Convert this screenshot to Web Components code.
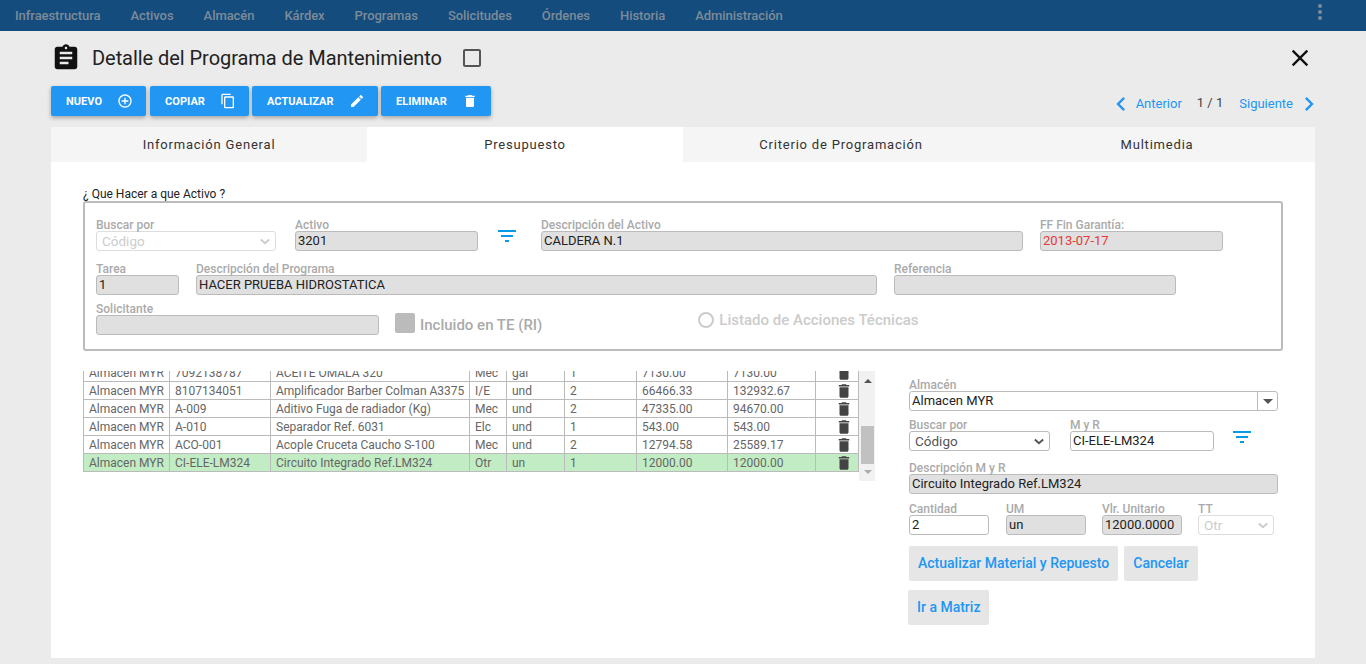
<!DOCTYPE html>
<html lang="es"><head><meta charset="utf-8"><title>Detalle del Programa de Mantenimiento</title>
<style>
html,body{margin:0;padding:0;height:664px;overflow:hidden;background:#ebebeb;font-family:Roboto,"Liberation Sans",sans-serif}
</style></head><body>
<app-page></app-page>
<script>
const P={
assignment:"M19 3h-4.18C14.4 1.84 13.3 1 12 1c-1.3 0-2.4.84-2.82 2H5c-1.1 0-2 .9-2 2v14c0 1.1.9 2 2 2h14c1.1 0 2-.9 2-2V5c0-1.1-.9-2-2-2zm-7 0c.55 0 1 .45 1 1s-.45 1-1 1-1-.45-1-1 .45-1 1-1zm2 14H7v-2h7v2zm3-4H7v-2h10v2zm0-4H7V7h10v2z",
add:"M13 7h-2v4H7v2h4v4h2v-4h4v-2h-4V7zm-1-5C6.49 2 2 6.49 2 12s4.49 10 10 10 10-4.49 10-10S17.51 2 12 2zm0 18c-4.41 0-8-3.59-8-8s3.59-8 8-8 8 3.59 8 8-3.59 8-8 8z",
copy:"M16 1H4c-1.1 0-2 .9-2 2v14h2V3h12V1zm3 4H8c-1.1 0-2 .9-2 2v14c0 1.1.9 2 2 2h11c1.1 0 2-.9 2-2V7c0-1.1-.9-2-2-2zm0 16H8V7h11v14z",
edit:"M3 17.25V21h3.75L17.81 9.94l-3.75-3.75L3 17.25zM20.71 7.04c.39-.39.39-1.02 0-1.41l-2.34-2.34c-.39-.39-1.02-.39-1.41 0l-1.83 1.83 3.75 3.75 1.83-1.83z",
del:"M6 19c0 1.1.9 2 2 2h8c1.1 0 2-.9 2-2V7H6v12zM19 4h-3.5l-1-1h-5l-1 1H5v2h14V4z",
filter:"M10 18h4v-2h-4v2zM3 6v2h18V6H3zm3 7h12v-2H6v2z",
close:"M19 6.41L17.59 5 12 10.59 6.41 5 5 6.41 10.59 12 5 17.59 6.41 19 12 13.41 17.59 19 19 17.59 13.41 12z",
more:"M12 8c1.1 0 2-.9 2-2s-.9-2-2-2-2 .9-2 2 .9 2 2 2zm0 2c-1.1 0-2 .9-2 2s.9 2 2 2 2-.9 2-2-.9-2-2-2zm0 6c-1.1 0-2 .9-2 2s.9 2 2 2 2-.9 2-2-.9-2-2-2z",
prev:"M15.41 7.41L14 6l-6 6 6 6 1.41-1.41L10.83 12z",
next:"M10 6L8.59 7.41 13.17 12l-4.58 4.58L10 18l6-6z",
box:"M19 5v14H5V5h14m0-2H5c-1.1 0-2 .9-2 2v14c0 1.1.9 2 2 2h14c1.1 0 2-.9 2-2V5c0-1.1-.9-2-2-2z"
};
class XIcon extends HTMLElement{connectedCallback(){
 const s=this.getAttribute('size')||24,c=this.getAttribute('color')||'currentColor';
 this.attachShadow({mode:'open'}).innerHTML=`<style>:host{display:inline-flex;flex:none}svg{display:block}</style><svg width="${s}" height="${s}" viewBox="0 0 24 24" fill="${c}"><path d="${P[this.getAttribute('name')]}"/></svg>`;
}}
customElements.define('x-icon',XIcon);

class XNav extends HTMLElement{connectedCallback(){
 const items=['Infraestructura','Activos','Almacén','Kárdex','Programas','Solicitudes','Órdenes','Historia','Administración'];
 this.attachShadow({mode:'open'}).innerHTML=`<style>
 :host{display:flex;height:31px;background:#134c7d;align-items:center;padding-left:15px;padding-right:34px;box-sizing:border-box;position:relative}
 nav{display:flex;flex:1;gap:30px}
 span{font:500 13px/31px Roboto,sans-serif;letter-spacing:-.06px;color:#7d8b98;white-space:nowrap}
 .dots{margin-top:-7px}
 </style><nav>${items.map(i=>`<span>${i}</span>`).join('')}</nav><x-icon class="dots" name="more" size="24" color="#7d8b98"></x-icon>`;
}}
customElements.define('x-nav',XNav);

class XBtn extends HTMLElement{connectedCallback(){
 const w=this.getAttribute('w');
 this.attachShadow({mode:'open'}).innerHTML=`<style>
 :host{display:inline-flex;width:${w}px;height:30px;box-sizing:border-box;background:#2196f3;border-radius:2px;color:#fff;align-items:center;justify-content:space-between;padding:0 13px 0 15px;box-shadow:0 2px 4px rgba(0,0,0,.3);font:700 11px/30px Roboto,sans-serif}
 span{padding-top:2px;letter-spacing:.05px}
 </style><span><slot></slot></span><x-icon name="${this.getAttribute('icon')}" size="16" color="#fff"></x-icon>`;
}}
customElements.define('x-btn',XBtn);

class XTabs extends HTMLElement{connectedCallback(){
 const t=['Información General','Presupuesto','Criterio de Programación','Multimedia'];
 this.attachShadow({mode:'open'}).innerHTML=`<style>
 :host{display:grid;grid-template-columns:316px 316px 316px 316px;height:35px;background:#f5f5f5}
 div{font:400 13px/35px Roboto,sans-serif;letter-spacing:.8px;color:#333;text-align:center}
 .on{background:#fff}
 </style>${t.map((x,i)=>`<div class="${i==1?'on':''}">${x}</div>`).join('')}`;
}}
customElements.define('x-tabs',XTabs);

class XField extends HTMLElement{connectedCallback(){
 const a=n=>this.getAttribute(n);
 const kind=a('kind')||'ro', w=a('w'), color=a('color')||'#222';
 const chev=c=>`<svg class="chev" width="10" height="7" viewBox="0 0 12 8" fill="none" stroke="${c}" stroke-width="2.4"><path d="M1 1.5l5 4.5 5-4.5"/></svg>`;
 let right='';
 if(kind=='sel')right=chev('#555');
 if(kind=='seld')right=chev('#ccc');
 if(kind=='combo')right=`<i class="drop"><svg width="10" height="5" viewBox="0 0 10 5"><path d="M0 0h10L5 5z" fill="#555"/></svg></i>`;
 this.attachShadow({mode:'open'}).innerHTML=`<style>
 :host{display:block;width:${w}px;flex:none}
 label{display:block;height:12px;font:500 12px/12px Roboto,sans-serif;color:#aaa;white-space:nowrap}
 .in{box-sizing:border-box;height:20px;border:1px solid #bbb;border-radius:3px;display:flex;align-items:center;justify-content:space-between;padding:0 2px;font:400 13px/18px Roboto,sans-serif;color:${color};background:#fff;white-space:nowrap;overflow:hidden}
 .ro{background:#e0e0e0}
 .sel,.seld{padding:0 5px;font-size:13.5px}
 .sel span{color:#555}
 .seld{border-color:#ddd}.seld span{color:#ccc}
 .combo{padding:0 0 0 2px;color:#222}
 .drop{display:flex;align-items:center;justify-content:center;width:19px;height:18px;border-left:1px solid #bbb}
 </style><label>${a('label')}</label><div class="in ${kind}"><span>${a('value')||''}</span>${right}</div>`;
}}
customElements.define('x-field',XField);

class XTable extends HTMLElement{connectedCallback(){
 const rows=[
 ['Almacen MYR','7092138787','ACEITE OMALA 320','Mec','gal','1','7130.00','7130.00'],
 ['Almacen MYR','8107134051','Amplificador Barber Colman A3375','I/E','und','2','66466.33','132932.67'],
 ['Almacen MYR','A-009','Aditivo Fuga de radiador (Kg)','Mec','und','2','47335.00','94670.00'],
 ['Almacen MYR','A-010','Separador Ref. 6031','Elc','und','1','543.00','543.00'],
 ['Almacen MYR','ACO-001','Acople Cruceta Caucho S-100','Mec','und','2','12794.58','25589.17'],
 ['Almacen MYR','CI-ELE-LM324','Circuito Integrado Ref.LM324','Otr','un','1','12000.00','12000.00']];
 const cols=[86,101,199,37,58,72,91,88,43];
 this.attachShadow({mode:'open'}).innerHTML=`<style>
 :host{display:flex;width:792px;height:111px;align-items:flex-start;flex:none}
 .wrap{width:776px;height:102px;overflow:hidden}
 table{border-collapse:collapse;table-layout:fixed;width:776px;margin-top:-8px}
 td{height:18px;box-sizing:border-box;padding:0 0 0 5px;border:1px solid #bbb;font:400 12px/16px Roboto,sans-serif;color:#666;white-space:nowrap;overflow:hidden}
 tr.sel td{background:#c2ecc4}
 td.t{padding:0 0 0 14px}
 td.t x-icon{display:flex;height:16px;justify-content:center;align-items:center}
 .bar{width:16px;height:110px;background:#f1f1f1;display:flex;flex-direction:column;align-items:center;justify-content:space-between;position:relative;padding:8px 0 7px 1px;box-sizing:border-box}
 .thumb{position:absolute;left:2px;top:55px;width:13px;height:38px;background:#c1c1c1}
 </style><div class="wrap"><table><colgroup>${cols.map(c=>`<col style="width:${c}px">`).join('')}</colgroup>
 ${rows.map((r,i)=>`<tr class="${i==5?'sel':''}">${r.map(c=>`<td>${c}</td>`).join('')}<td class="t"><x-icon name="del" size="18" color="#444"></x-icon></td></tr>`).join('')}
 </table></div><div class="bar"><svg width="8" height="4" viewBox="0 0 8 4"><path d="M4 0l4 4H0z" fill="#555"/></svg><div class="thumb"></div><svg width="8" height="4" viewBox="0 0 8 4"><path d="M0 0h8L4 4z" fill="#aaa"/></svg></div>`;
}}
customElements.define('x-table',XTable);

class XGray extends HTMLElement{connectedCallback(){
 this.attachShadow({mode:'open'}).innerHTML=`<style>
 :host{display:inline-block;height:35px;padding:0 9px;background:#e6e6e6;border-radius:2px;color:#2196f3;font:500 14px/35px Roboto,sans-serif;white-space:nowrap}
 </style><slot></slot>`;
}}
customElements.define('x-gray',XGray);

class AppPage extends HTMLElement{connectedCallback(){
 this.attachShadow({mode:'open'}).innerHTML=`<style>
 :host{display:flex;flex-direction:column;height:664px;font-family:Roboto,sans-serif}
 main{flex:1;display:flex;flex-direction:column;padding:0 51px 6px;min-height:0}
 .head{display:flex;align-items:center;height:54px}
 .head h1{font:400 20px/28px Roboto,sans-serif;color:#222;margin:0 0 0 11px;letter-spacing:-.05px}
 .head .cb{margin-left:18px}
 .head .x{margin-left:auto;margin-right:1px}
 .acts{display:flex;align-items:center;height:31px;gap:4px}
 .pager{margin-left:auto;display:flex;align-items:center;font:400 13px/20px Roboto,sans-serif;color:#2196f3;margin-top:7px;margin-right:-8px}
 .pager b{font-weight:400;color:#444;margin:-3px 16px 0 15px}
 .card{margin-top:11px;flex:1;background:#fff;display:flex;flex-direction:column}
 .body{padding:26px 32px 0;flex:1}
 .legend{font:400 12px/12px Roboto,sans-serif;color:#222;height:12px}
 .box{box-sizing:border-box;height:150px;border:2px solid #bbb;border-radius:3px;padding:16px 11px 0;display:flex;flex-direction:column;margin-top:1px}
 .r{display:flex;align-items:flex-end}
 .r1{margin-bottom:12px}.r2{margin-bottom:8px}
 .fi{display:block;margin:0 0 3px}
 .chk{width:20px;height:20px;background:#bbb;border-radius:2px;flex:none;margin:0 5px 2px 16px}
 .cl{font:500 15px/20px Roboto,sans-serif;color:#aaa;white-space:nowrap}
 .rad{width:16px;height:16px;box-sizing:border-box;border:2px solid #ccc;border-radius:50%;flex:none;margin:0 5px 7px 156px}
 .rl{font:500 15px/20px Roboto,sans-serif;color:#ccc;white-space:nowrap;margin-bottom:5px}
 .bot{display:flex;margin-top:20px}
 .side{margin-left:34px;margin-top:8px;width:369px}
 .side .r{margin-bottom:8px}
 .side .r.b{margin-bottom:9px}
 </style>
 <x-nav></x-nav>
 <main>
  <div class="head"><x-icon name="assignment" size="30" color="#111" style="margin-top:-1px"></x-icon>
   <h1>Detalle del Programa de Mantenimiento</h1>
   <x-icon class="cb" name="box" size="24" color="#555"></x-icon>
   <x-icon class="x" name="close" size="28" color="#111"></x-icon></div>
  <div class="acts">
   <x-btn w="95" icon="add">NUEVO</x-btn><x-btn w="99" icon="copy" style="margin-right:-1px">COPIAR</x-btn><x-btn w="126" icon="edit" style="margin-right:-1px">ACTUALIZAR</x-btn><x-btn w="110" icon="del">ELIMINAR</x-btn>
   <div class="pager"><x-icon name="prev" size="28" color="#2196f3"></x-icon><span style="margin-left:1px">Anterior</span><b>1 / 1</b><span>Siguiente</span><x-icon name="next" size="28" color="#2196f3" style="margin-left:2px"></x-icon></div>
  </div>
  <div class="card">
   <x-tabs></x-tabs>
   <div class="body">
    <div class="legend">¿ Que Hacer a que Activo ?</div>
    <div class="box">
     <div class="r r1">
      <x-field label="Buscar por" value="Código" w="180" kind="seld"></x-field>
      <x-field label="Activo" value="3201" w="183" style="margin-left:19px"></x-field>
      <x-icon class="fi" name="filter" size="24" color="#039be5" style="margin-left:17px"></x-icon>
      <x-field label="Descripción del Activo" value="CALDERA N.1" w="482" style="margin-left:22px"></x-field>
      <x-field label="FF Fin Garantía:" value="2013-07-17" color="#e53935" w="183" style="margin-left:17px"></x-field>
     </div>
     <div class="r r2">
      <x-field label="Tarea" value="1" w="83"></x-field>
      <x-field label="Descripción del Programa" value="HACER PRUEBA HIDROSTATICA" w="681" style="margin-left:17px"></x-field>
      <x-field label="Referencia" w="282" style="margin-left:17px"></x-field>
     </div>
     <div class="r">
      <x-field label="Solicitante" w="283"></x-field>
      <div class="chk"></div><div class="cl">Incluido en TE (RI)</div>
      <div class="rad"></div><div class="rl">Listado de Acciones Técnicas</div>
     </div>
    </div>
    <div class="bot">
     <x-table></x-table>
     <div class="side">
      <div class="r"><x-field label="Almacén" value="Almacen MYR" w="369" kind="combo"></x-field></div>
      <div class="r" style="margin-bottom:11px"><x-field label="Buscar por" value="Código" w="141" kind="sel"></x-field>
       <x-field label="M y R" value="CI-ELE-LM324" w="144" kind="plain" style="margin-left:20px"></x-field>
       <x-icon class="fi" name="filter" size="24" color="#039be5" style="margin-left:16px;margin-bottom:2px"></x-icon></div>
      <div class="r" style="margin-bottom:9px"><x-field label="Descripción M y R" value="Circuito Integrado Ref.LM324" w="369"></x-field></div>
      <div class="r" style="margin-bottom:11px"><x-field label="Cantidad" value="2" w="80" kind="plain"></x-field>
       <x-field label="UM" value="un" w="80" style="margin-left:17px"></x-field>
       <x-field label="Vlr. Unitario" value="12000.0000" w="80" style="margin-left:16px"></x-field>
       <x-field label="TT" value="Otr" w="76" kind="seld" style="margin-left:16px"></x-field></div>
      <div class="r b"><x-gray>Actualizar Material y Repuesto</x-gray><x-gray style="margin-left:6px">Cancelar</x-gray></div>
      <div class="r b" style="margin-left:-1px"><x-gray>Ir a Matriz</x-gray></div>
     </div>
    </div>
   </div>
  </div>
 </main>`;
}}
customElements.define('app-page',AppPage);
</script>
</body></html>
